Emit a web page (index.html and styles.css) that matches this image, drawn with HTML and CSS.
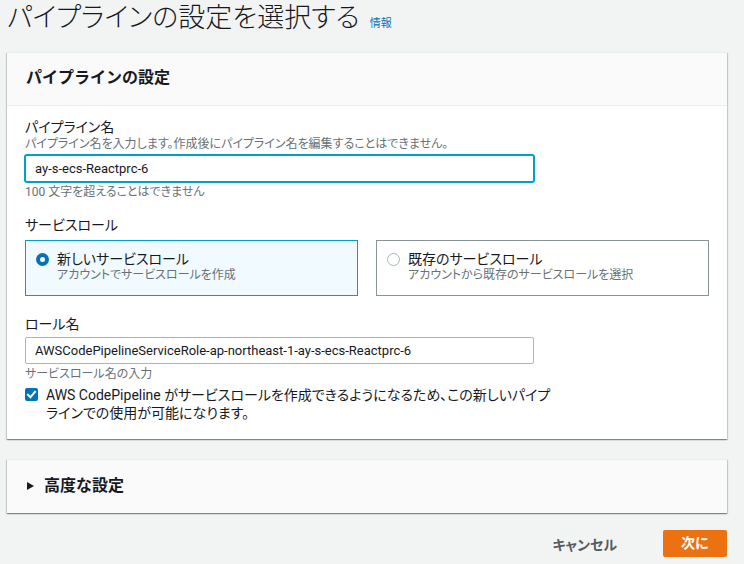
FILE: index.html
```html
<!DOCTYPE html>
<html lang="ja">
<head>
<meta charset="utf-8">
<title>パイプラインの設定を選択する</title>
<link rel="stylesheet" href="styles.css">
</head>
<body>
<div class="page">
  <div class="title-row">
    <h1 class="title">パイプラインの設定を選択する</h1>
    <a class="info" href="#">情報</a>
  </div>

  <section class="panel">
    <div class="panel-header">パイプラインの設定</div>
    <div class="panel-body">
      <div class="label">パイプライン名</div>
      <div class="desc">パイプライン名を入力します。作成後にパイプライン名を編集することはできません。</div>
      <div class="input focused">ay-s-ecs-Reactprc-6</div>
      <div class="hint">100 文字を超えることはできません</div>

      <div class="label section-gap">サービスロール</div>
      <div class="tiles">
        <div class="tile selected">
          <span class="radio on"></span>
          <div class="tile-text">
            <div class="tile-title">新しいサービスロール</div>
            <div class="tile-sub">アカウントでサービスロールを作成</div>
          </div>
        </div>
        <div class="tile">
          <span class="radio"></span>
          <div class="tile-text">
            <div class="tile-title">既存のサービスロール</div>
            <div class="tile-sub">アカウントから既存のサービスロールを選択</div>
          </div>
        </div>
      </div>

      <div class="label role-gap">ロール名</div>
      <div class="input plain">AWSCodePipelineServiceRole-ap-northeast-1-ay-s-ecs-Reactprc-6</div>
      <div class="hint">サービスロール名の入力</div>

      <div class="check-row">
        <span class="checkbox">
          <svg viewBox="0 0 13 13" width="13" height="13"><path d="M3 6.8 L5.4 9.2 L10 3.8" fill="none" stroke="#fff" stroke-width="2" stroke-linecap="square"/></svg>
        </span>
        <div class="check-text">AWS CodePipeline がサービスロールを作成できるようになるため、この新しいパイプラインでの使用が可能になります。</div>
      </div>
    </div>
  </section>

  <section class="panel collapsed">
    <div class="expander"><span class="caret"></span>高度な設定</div>
  </section>

  <div class="actions">
    <a class="btn-link" href="#">キャンセル</a>
    <a class="btn-primary" href="#">次に</a>
  </div>
</div>
</body>
</html>
```

FILE: styles.css
```css
* { box-sizing: border-box; }

html, body {
  margin: 0;
  background: #f2f3f3;
}

body {
  font-family: Roboto, "Noto Sans CJK JP", sans-serif;
  color: #16191f;
  font-size: 14px;
}

.page {
  padding: 0 17px 0 7px;
}

.title-row {
  display: flex;
  align-items: baseline;
  height: 36px;
  margin-bottom: 16px;
}

.title {
  margin: 0;
  font-size: 27px;
  font-weight: 300;
  line-height: 36px;
  color: #16191f;
  font-feature-settings: "palt";
}

.info {
  margin-left: 10px;
  font-size: 11px;
  color: #0073bb;
  text-decoration: none;
  font-weight: 400;
}

.panel {
  background: #fff;
  border-top: 1px solid #eaeded;
  box-shadow: 0 1px 1px 0 rgba(0, 28, 36, 0.3), 1px 1px 1px 0 rgba(0, 28, 36, 0.15), -1px 1px 1px 0 rgba(0, 28, 36, 0.15);
}

.panel-header {
  background: #fafafa;
  border-bottom: 1px solid #eaeded;
  padding: 14px 19px 17px;
  line-height: 21px;
  font-size: 16px;
  font-weight: 700;
}

.panel-body {
  padding: 12px 18px 17px;
}

.label {
  font-size: 14px;
  line-height: 18px;
  font-feature-settings: "palt";
}

.desc {
  font-size: 12px;
  line-height: 16px;
  color: #687078;
  font-feature-settings: "palt";
}

.hint {
  margin-top: 2px;
  font-size: 12px;
  line-height: 16px;
  color: #687078;
  font-feature-settings: "palt";
}

.input {
  width: 509px;
  height: 27px;
  margin-top: 2px;
  padding: 0 9px;
  font-size: 13px;
  line-height: 25px;
  color: #16191f;
  background: #fff;
  border: 1px solid #aab7b8;
  border-radius: 2px;
  white-space: nowrap;
}

.input.focused {
  border-color: #00a1c9;
  box-shadow: 0 0 0 1px #00a1c9;
  margin-top: 3px;
}

.input.plain {
  margin-top: 4px;
}

.section-gap {
  margin-top: 16px;
}

.role-gap {
  margin-top: 19px;
}

.tiles {
  display: grid;
  grid-template-columns: 1fr 1fr;
  gap: 18px;
  margin-top: 6px;
}

.tile {
  display: flex;
  align-items: flex-start;
  gap: 8px;
  height: 56px;
  padding: 9px 10px 0;
  border: 1px solid #879596;
  background: #fff;
}

.tile.selected {
  border-color: #00a1c9;
  background: #f1faff;
}

.radio {
  flex: none;
  width: 13px;
  height: 13px;
  margin-top: 3px;
  border-radius: 50%;
  border: 1px solid #aab7b8;
  background: #fff;
}

.radio.on {
  border: 4px solid #0073bb;
}

.tile-title {
  font-size: 14px;
  line-height: 18px;
  font-feature-settings: "palt";
}

.tile-sub {
  font-size: 12px;
  line-height: 15px;
  color: #687078;
  font-feature-settings: "palt";
}

.check-row {
  display: flex;
  align-items: flex-start;
  gap: 8px;
  margin-top: 4px;
}

.checkbox {
  flex: none;
  width: 13px;
  height: 13px;
  margin-top: 2px;
  border-radius: 2px;
  background: #0073bb;
  display: flex;
}

.check-text {
  width: 506px;
  font-size: 14px;
  line-height: 18px;
  font-feature-settings: "palt";
}

.collapsed {
  margin-top: 20px;
}

.expander {
  display: flex;
  align-items: center;
  gap: 10px;
  padding: 15px 20px 17px;
  line-height: 21px;
  font-size: 16px;
  font-weight: 700;
  background: #fafafa;
}

.caret {
  width: 0;
  height: 0;
  border-left: 7px solid #16191f;
  border-top: 4.5px solid transparent;
  border-bottom: 4.5px solid transparent;
}

.actions {
  display: flex;
  justify-content: flex-end;
  align-items: center;
  gap: 46px;
  margin-top: 17px;
}

.btn-link {
  font-size: 14px;
  font-weight: 700;
  color: #545b64;
  text-decoration: none;
  font-feature-settings: "palt";
}

.btn-primary {
  display: block;
  width: 64px;
  height: 27px;
  line-height: 27px;
  text-align: center;
  font-size: 14px;
  font-weight: 700;
  color: #fff;
  background: #ec7211;
  border-radius: 2px;
  text-decoration: none;
}
```
